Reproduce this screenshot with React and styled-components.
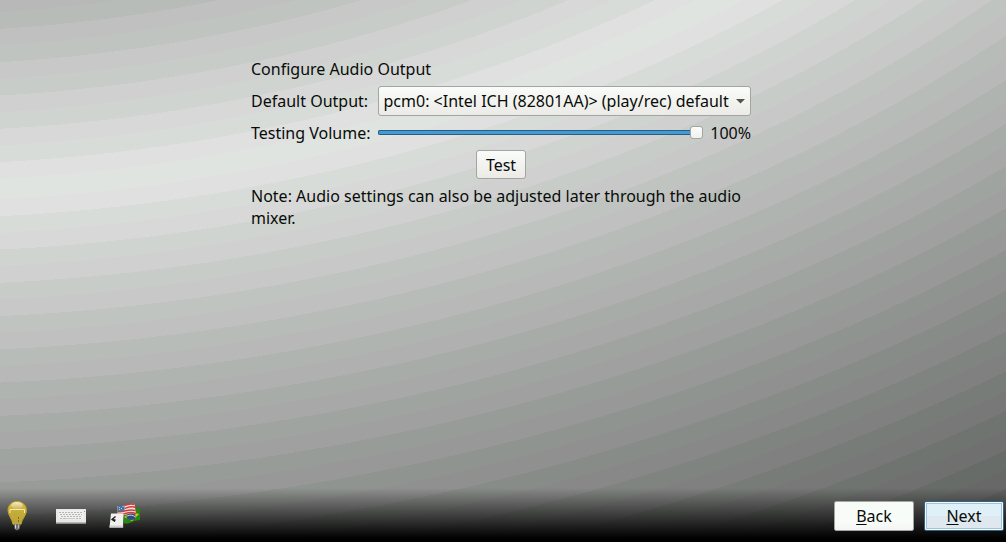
import React, { useState } from "react";
import styled, { createGlobalStyle, css } from "styled-components";

const GlobalStyle = createGlobalStyle`
  *, *::before, *::after { box-sizing: border-box; }
  body {
    margin: 0;
    font-family: "Noto Sans", "Open Sans", sans-serif;
    font-size: 16px;
    line-height: 22px;
    color: #080c08;
  }
  button, select, input { font: inherit; color: inherit; margin: 0; }
`;

// Wallpaper: rings of light grey around a far centre, brightest on one ring.
// Each brightness level is a plain grey band followed by a slightly green one.
const RING = 33.2;
const RADIUS = 2000;

function ringStops() {
  const bands = [];
  const tone = (level, green) => `rgb(${level}, ${level + (green ? 4 : 0)}, ${level})`;
  for (let i = 6; i >= 0; i -= 1) {
    const start = 1025 - i * RING;
    const level = 224 - i * 8;
    bands.push([tone(level, false), start, start + RING / 2]);
    bands.push([tone(level, true), start + RING / 2, i ? start + RING : 1062]);
  }
  bands.push([tone(224, false), 1062, 1079]);
  for (let i = 0; i < 24; i += 1) {
    const start = 1079 + i * RING;
    const level = 216 - i * 8;
    bands.push([tone(level, true), start, start + RING / 2]);
    bands.push([tone(level, false), start + RING / 2, start + RING]);
  }
  const pct = (r) => `${((r / RADIUS) * 100).toFixed(2)}%`;
  return bands.map(([c, a, b]) => `${c} ${pct(a)} ${pct(b)}`).join(", ");
}

const Screen = styled.div`
  display: flex;
  flex-direction: column;
  min-height: 100vh;
  background: radial-gradient(269.8% 369% at -10.1% -158.7%, ${ringStops()});
`;

const Page = styled.main`
  flex: 1;
  display: grid;
  grid-template-columns: 1fr 2fr 1fr;
  align-items: start;
  padding: 58px 5px 0 1px;
`;

const Panel = styled.form`
  grid-column: 2;
  display: flex;
  flex-direction: column;
  gap: 6px;
`;

const Title = styled.h1`
  margin: 0;
  font-size: 16px;
  font-weight: 400;
`;

const Fields = styled.div`
  display: grid;
  grid-template-columns: auto 1fr;
  align-items: center;
  gap: 6px 7px;
`;

const Label = styled.label`
  text-align: left;
`;

const raised = css`
  background: linear-gradient(#fafcfa, #ebeae6);
  border: 1px solid #a2a5a1;
  border-radius: 3px;
`;

const SelectBox = styled.div`
  position: relative;
  display: flex;
`;

const Select = styled.select`
  ${raised}
  appearance: none;
  flex: 1;
  min-width: 0;
  height: 30px;
  padding: 0 20px 0 5px;
`;

const Arrow = styled.svg`
  position: absolute;
  right: 6px;
  top: 13px;
  width: 9px;
  height: 5px;
  pointer-events: none;
`;

const VolumeRow = styled.div`
  display: flex;
  align-items: center;
  gap: 7px;
`;

const thumb = css`
  appearance: none;
  width: 13px;
  height: 13px;
  margin-top: -4px;
  background: linear-gradient(#fcfcfc, #f0f0ee);
  border: 1px solid #a2a5a1;
  border-radius: 3px;
`;

const Slider = styled.input`
  appearance: none;
  flex: 1;
  min-width: 0;
  height: 14px;
  margin-bottom: 1px;
  background: none;

  &::-webkit-slider-runnable-track {
    height: 5px;
    background: #409cd8;
    box-shadow: inset 0 0 0 1px #305c78;
    border-radius: 2px;
  }
  &::-webkit-slider-thumb { ${thumb} }
`;

const Note = styled.p`
  margin: 0;
`;

const TestButton = styled.button`
  ${raised}
  align-self: center;
  height: 29px;
  padding: 0 9px;
`;

const BottomBar = styled.footer`
  display: flex;
  align-items: center;
  justify-content: space-between;
  padding: 12px 2px 10px 1px;
  background: linear-gradient(transparent, #000 94%);
`;

const Tools = styled.div`
  display: flex;
  gap: 22px;
`;

const ToolButton = styled.button`
  width: 32px;
  height: 32px;
  padding: 0;
  border: 0;
  background: none;

  svg { display: block; }
`;

const NavButtons = styled.div`
  display: flex;
  gap: 10px;
`;

const NavButton = styled.button`
  width: 80px;
  height: 30px;
  padding: 0;
  border-radius: 2px;
  border: 1px solid ${(p) => (p.$primary ? "#2f6488" : "#a2a5a1")};
  background: ${(p) =>
    p.$primary
      ? "linear-gradient(#e0f0f8 50%, #dfe8ee 50%)"
      : "linear-gradient(#f8fcf8 70%, #f4f5f4)"};
  box-shadow: ${(p) =>
    p.$primary ? "inset 0 0 0 1px #f4fafc, inset 0 0 0 2px #a4c4d4" : "none"};
`;

const Mnemonic = styled.span`
  text-decoration: underline;
  text-decoration-thickness: 1px;
  text-underline-offset: 2px;
  text-decoration-skip-ink: none;
`;

function BulbIcon() {
  return (
    <svg width="32" height="32" viewBox="0 0 32 32" aria-hidden="true">
      <defs>
        <linearGradient id="glass" x1="0" y1="0" x2="0" y2="1">
          <stop offset="0" stopColor="#d8bc48" />
          <stop offset="0.5" stopColor="#c4ac38" />
          <stop offset="1" stopColor="#b8a440" />
        </linearGradient>
        <linearGradient id="shine" x1="0" y1="0" x2="0" y2="1">
          <stop offset="0" stopColor="#f4ecd0" />
          <stop offset="1" stopColor="#d0b848" />
        </linearGradient>
      </defs>
      <path
        d="M16 1.500C10.500 1.500 7 5.500 7 10.300c0 5 4 8.200 5 14h8C21 18.500 25.500 15.300 25.500 10.300c0-4.800-4-8.800-9.500-8.800z"
        fill="url(#glass)"
        stroke="#c0a020"
      />
      <ellipse cx="16" cy="5.500" rx="6" ry="3.500" fill="url(#shine)" />
      <path d="M9 13V9.500h14.500V13" fill="none" stroke="#f0e8b8" />
      <path d="M17.500 17v2M17.500 20v2" stroke="#806c28" />
      <path d="M13 24h6.500l-1 5-2.500 1.500-2.500-1.500z" fill="#707070" />
      <path d="M14.500 24.500v4" stroke="#d8d8d4" />
      <path d="M17.500 24.500v4" stroke="#b8b8b4" />
    </svg>
  );
}

function KeyboardIcon() {
  return (
    <svg width="32" height="32" viewBox="0 0 32 32" aria-hidden="true">
      <path d="M1 9h30v14.500H1z" fill="#e8e9e6" />
      <path d="M1 22.500h30" stroke="#b8bab6" />
      <path d="M3.500 10.500h25v9h-25z" fill="#f0f0ee" />
      <g stroke="#b4b6b2" strokeDasharray="2 1">
        <path d="M4 12.500h24" />
        <path d="M5 14.500h22" />
        <path d="M6 16.500h20" />
        <path d="M5 18.500h5M21 18.500h6" />
      </g>
      <path d="M10 18.500h10" stroke="#c8cac6" />
      <path d="M29 11.500h1" stroke="#98a060" />
    </svg>
  );
}

function LocaleIcon() {
  return (
    <svg width="32" height="32" viewBox="0 0 32 32" aria-hidden="true">
      <path d="M14 13c5 3 9-5 17-4.500V20c-6 0-9 4-16 3.500z" fill="#28880c" />
      <path d="M15 17l7-5 8 2-7 7z" fill="#d8c030" />
      <ellipse cx="22" cy="16.500" rx="4.500" ry="3.500" fill="#304c80" />
      <path d="M18 16c3-1.500 6-1 8.500 1" fill="none" stroke="#c8d4d8" />
      <path d="M8.500 6c6 1.500 10-3.500 17-2l1.500 10c-7-3-11 3-18.500 1z" fill="#f0e4e0" />
      <g fill="none" stroke="#d03c38" strokeWidth="1.500">
        <path d="M15.500 5.500c3.500-1.500 6-2.500 10-1" />
        <path d="M15.500 8.500c4-1.500 7-3 11-1.200" />
        <path d="M8.500 11.500c7 1.500 10-3.500 18-1" />
        <path d="M8.500 14.200c7 1.200 11-4 18.500-.5" />
      </g>
      <path d="M9 5.500c2.500 1 4 .5 6.500-.5v5.500c-2.500 1-4.500 1.200-7 .5z" fill="#4474a8" />
      <path d="M10 7.500h1M12 8.500h1M10 9.500h1M13.500 6.500h1" stroke="#b0c8dc" />
      <path d="M2 13.500h12.500l-.5 14H.5z" fill="#f0f0ee" />
      <path d="M.7 25.500h13.500v2H.5z" fill="#d0d2ce" />
      <path d="M6.500 16.500l-3.500 3 3 2M4 20h2.500" fill="none" stroke="#181818" strokeWidth="1.300" />
    </svg>
  );
}

export default function App() {
  const [volume, setVolume] = useState(100);

  return (
    <Screen>
      <GlobalStyle />
      <Page>
        <Panel onSubmit={(e) => e.preventDefault()}>
          <Title>Configure Audio Output</Title>
          <Fields>
            <Label htmlFor="output">Default Output:</Label>
            <SelectBox>
              <Select id="output">
                <option>{"pcm0: <Intel ICH (82801AA)> (play/rec) default"}</option>
              </Select>
              <Arrow viewBox="0 0 9 5" aria-hidden="true">
                <path d="M0 0h9L4.500 4.500z" fill="#50544f" />
              </Arrow>
            </SelectBox>
            <Label htmlFor="volume">Testing Volume:</Label>
            <VolumeRow>
              <Slider
                id="volume"
                type="range"
                min="0"
                max="100"
                value={volume}
                onChange={(e) => setVolume(Number(e.target.value))}
              />
              <output htmlFor="volume">{volume}%</output>
            </VolumeRow>
          </Fields>
          <TestButton type="button">Test</TestButton>
          <Note>Note: Audio settings can also be adjusted later through the audio mixer.</Note>
        </Panel>
      </Page>
      <BottomBar>
        <Tools>
          <ToolButton type="button" aria-label="Hints">
            <BulbIcon />
          </ToolButton>
          <ToolButton type="button" aria-label="Keyboard">
            <KeyboardIcon />
          </ToolButton>
          <ToolButton type="button" aria-label="Language">
            <LocaleIcon />
          </ToolButton>
        </Tools>
        <NavButtons>
          <NavButton type="button">
            <Mnemonic>B</Mnemonic>ack
          </NavButton>
          <NavButton type="button" $primary>
            <Mnemonic>N</Mnemonic>ext
          </NavButton>
        </NavButtons>
      </BottomBar>
    </Screen>
  );
}
